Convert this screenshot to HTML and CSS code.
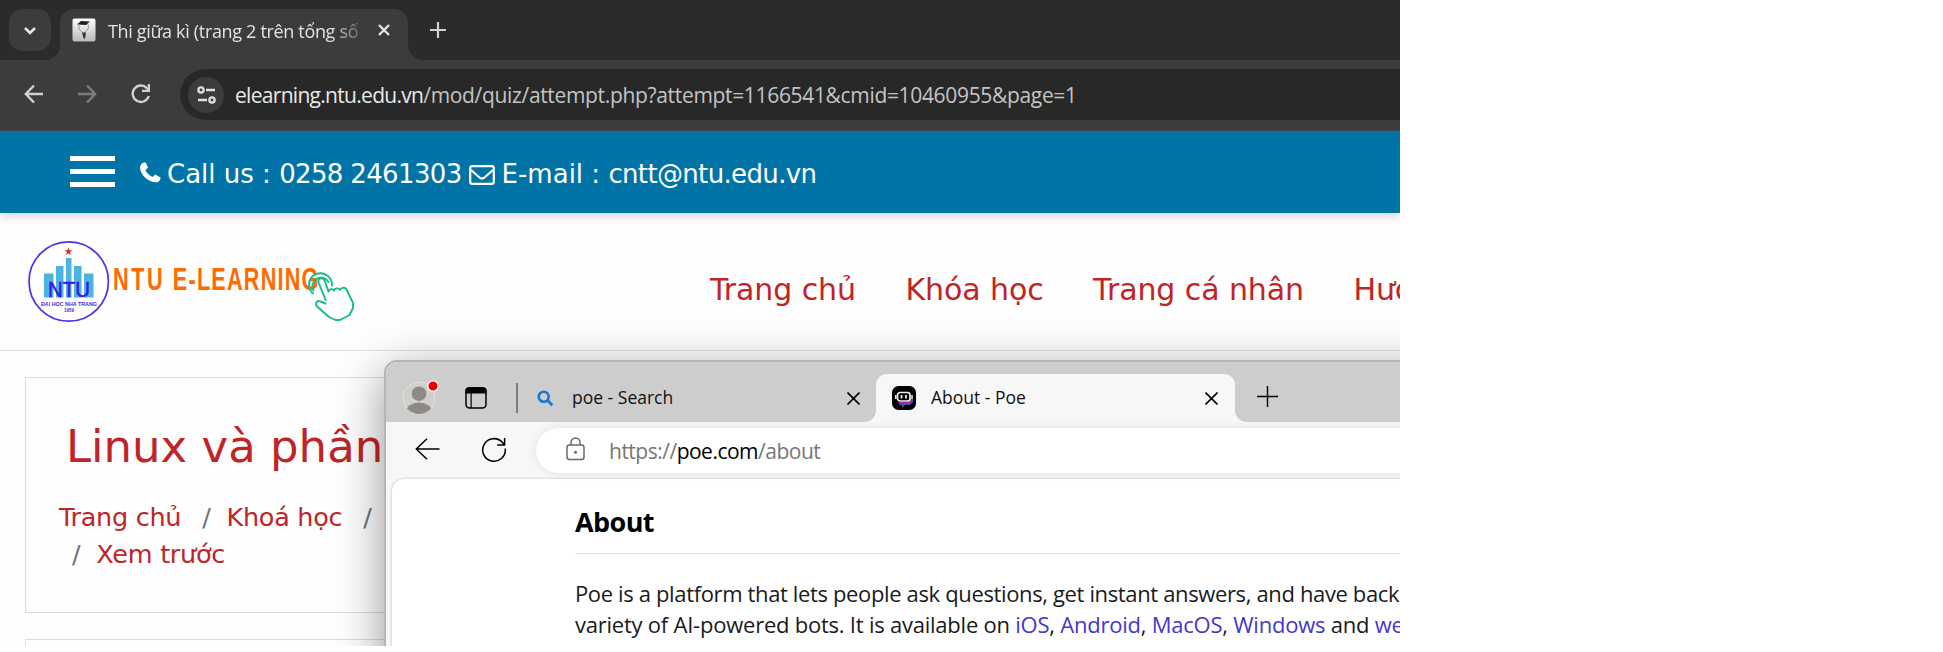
FILE: index.html
```html
<!DOCTYPE html>
<html lang="vi">
<head>
<meta charset="utf-8">
<title>Thi giữa kì</title>
<link rel="stylesheet" href="styles.css">
</head>
<body>
<main class="screen">
  <header class="chrome">
    <div class="tabstrip">
      <div class="tab-search"><svg width="14" height="9" viewBox="0 0 14 9"><path d="M2 2l5 5 5-5" fill="none" stroke="#e6e6e6" stroke-width="2.6"/></svg></div>
      <div class="chrome-tab">
        <svg class="favicon" width="24" height="24" viewBox="0 0 24 24"><defs><linearGradient id="fg" x1="0" y1="0" x2="0" y2="1"><stop offset="0" stop-color="#fff"/><stop offset="1" stop-color="#b9b9b9"/></linearGradient></defs><rect x=".5" y=".5" width="23" height="23" rx="2" fill="url(#fg)"/><path d="M5 6.500l4-3.500 9 .5-4 3.500z" fill="#222"/><path d="M7 6v5l4 4M16 6l.5 4-3 4" stroke="#999" fill="none"/><path d="M10 14.500h4l-1 6.500-1.500-1z" fill="#333"/></svg>
        <span class="chrome-title">Thi giữa kì (trang 2 trên tổng số</span>
        <svg class="tab-x" width="14" height="14" viewBox="0 0 14 14"><path d="M2 2l10 10M12 2L2 12" stroke="#e6e6e6" stroke-width="2.3"/></svg>
      </div>
      <svg class="tab-plus" width="16" height="16" viewBox="0 0 16 16"><path d="M8 0v16M0 8h16" stroke="#d0d0d0" stroke-width="2.2"/></svg>
    </div>
    <div class="toolbar">
      <svg class="t-back" width="20" height="20" viewBox="0 0 20 20"><path d="M19 10H2M10 1.500L1.800 10l8.200 8.500" fill="none" stroke="#d0d0d0" stroke-width="2.400"/></svg>
      <svg class="t-fwd" width="20" height="20" viewBox="0 0 20 20"><path d="M1 10h17M10 1.500l8.200 8.500L10 18.500" fill="none" stroke="#7d7d7d" stroke-width="2.400"/></svg>
      <svg class="t-reload" width="20" height="20" viewBox="0 0 20 20"><path d="M17.800 12A8.200 8.200 0 1 1 16 4.200L18 6.500" fill="none" stroke="#d0d0d0" stroke-width="2.400"/><path d="M19 0v8h-8V5.700h5.700V0z" fill="#d0d0d0"/></svg>
      <div class="omnibox">
        <div class="site-info"><svg width="19" height="18" viewBox="0 0 19 18"><g fill="none" stroke="#e0e0e0" stroke-width="2.300"><circle cx="4" cy="4" r="2.600"/><path d="M9 4h9M1 14h9"/><circle cx="15" cy="14" r="2.600"/></g></svg></div>
        <span class="url"><b class="host">elearning.ntu.edu.vn</b><span class="path">/mod/quiz/attempt.php?attempt=1166541&amp;cmid=10460955&amp;page=1</span></span>
      </div>
    </div>
  </header>

  <div class="contact">
    <div class="burger"><i></i><i></i><i></i></div>
    <svg class="phone" width="21" height="21" viewBox="0 0 21 21"><path d="M1 2.500C2 1 4 .300 5.500.300L8 5.500 5.500 8.200c1.500 3 4 5.500 7 6.800L15.200 12.500 20.500 15.500c.3 2-1 4-3 4.700C9.500 21.500-1 12.500.200 4.500z" fill="#fff"/></svg>
    <span class="call">Call us : <b class="tight">0258 2461303</b></span>
    <svg class="mail" width="26" height="20" viewBox="0 0 26 20"><rect x="1.200" y="1.200" width="23.600" height="17.600" rx="2" fill="none" stroke="#fff" stroke-width="2.200"/><path d="M2 5l8.500 7.500q2.500 2 5 0L24 5" fill="none" stroke="#fff" stroke-width="2.200"/></svg>
    <span class="email">E-mail : <b class="tight">cntt@ntu.edu.vn</b></span>
  </div>

  <div class="brandbar">
    <svg class="logo" width="330" height="84" viewBox="0 0 330 84">
      <circle cx="40.700" cy="41.500" r="39.700" fill="#fff" stroke="#5230ea" stroke-width="1.700"/>
      <path d="M40.500 7.500l1 2.800h3l-2.400 1.800.9 2.900-2.500-1.700-2.500 1.700.9-2.900-2.400-1.800h3z" fill="#dc2a2a"/>
      <path d="M16 33.500h9.500v24H16zM28 26h7.500v31.500H28zM38 18h5.500v39.500h-5.500zM46 26h7.500v31.500H46zM56 33.500h9.500v24H56z" fill="#4bb4e0"/>
      <text x="20" y="57" class="logo-ntu" textLength="42" lengthAdjust="spacingAndGlyphs">NTU</text>
      <text x="13" y="65.500" class="logo-small" textLength="56" lengthAdjust="spacingAndGlyphs">ĐẠI HỌC NHA TRANG</text>
      <text x="36" y="72" class="logo-small" textLength="10" lengthAdjust="spacingAndGlyphs">1959</text>
      <g transform="translate(85 50) scale(.7 1)"><text class="logo-name" textLength="71">NTU</text><text x="85.500" class="logo-name" textLength="208">E-LEARNING</text></g>
      <g fill="none" stroke="#12bd86" stroke-width="1.900" stroke-linejoin="round" stroke-linecap="round" transform="translate(280 33)">
        <path d="M17.700 27L10.500 9.500c-1-4 4-6 6-2.200L20.500 18.500c1-3 4.500-3 5.500-.8 1-3 4.500-3 6-.7 1-2.500 5-3 6.500-.7L45 30v5l-3.500 7-9.500 5h-4.500L21 44 8.500 33c-1.500-3.500 1-6 4-4.500l5 2"/>
        <path d="M5.500 17.500a8 8 0 1 1 15-8.500M5 20.500A11.500 11.500 0 1 1 24 12.500"/>
      </g>
    </svg>
    <nav class="nav"><a>Trang chủ</a><a>Khóa học</a><a>Trang cá nhân</a><a>Hướ</a></nav>
  </div>

  <section class="page">
    <div class="card">
      <h1>Linux và phần</h1>
      <div class="crumbs"><a>Trang chủ</a><i>/</i><a>Khoá học</a><i>/</i></div>
      <div class="crumbs second"><i>/</i><a>Xem trước</a></div>
    </div>
    <div class="card"></div>
  </section>

  <div class="edge">
    <div class="edge-tabs">
      <svg class="avatar" width="36" height="36" viewBox="0 0 36 36"><defs><clipPath id="av"><circle cx="17" cy="19" r="16"/></clipPath></defs><circle cx="17" cy="19" r="16" fill="#d1cfcb" stroke="#e2e1de"/><g clip-path="url(#av)" fill="#8d8984"><circle cx="17" cy="14.700" r="7.300"/><ellipse cx="17" cy="33" rx="13" ry="9.500"/></g><circle cx="31" cy="7" r="5.200" fill="#e60000" stroke="#fff" stroke-width="1.300"/></svg>
      <svg class="spaces" width="22" height="22" viewBox="0 0 22 22"><rect x="1" y="1" width="20" height="20" rx="3.500" fill="none" stroke="#000" stroke-width="1.500"/><path d="M.3 6.500V4Q.3.300 4 .3h14Q21.700.300 21.700 4v2.500zM5.500 6h1.200v15H5.500z"/></svg>
      <span class="divider"></span>
      <svg class="mag" width="17" height="17" viewBox="0 0 17 17"><circle cx="6.700" cy="6.700" r="5" fill="none" stroke="#1778d2" stroke-width="2.600"/><path d="M10.300 10.300l5 5" stroke="#1778d2" stroke-width="2.800"/></svg>
      <span class="edge-title">poe - Search</span>
      <svg class="x1" width="13" height="13" viewBox="0 0 13 13"><path d="M.5.500l12 12M12.500.500l-12 12" stroke="#000" stroke-width="1.600"/></svg>
      <div class="edge-active">
        <svg width="24" height="24" viewBox="0 0 24 24"><rect width="24" height="24" rx="6.500"/><path d="M8 17h10l3-5v4l-3 3h-5l-3 3v-3H7z" fill="#3554b8"/><path d="M6 16h11l3-4v4l-3 2h-6l-3 2v-2z" fill="#a52a93"/><rect x="5.500" y="6.500" width="12.500" height="8.500" rx="2.500" fill="#000" stroke="#eee" stroke-width="1.700"/><path d="M3.800 9v4M20 9v4" stroke="#eee" stroke-width="1.500"/><path d="M9.500 9v3.500M14 9v3.500" stroke="#eee" stroke-width="1.800"/></svg>
        <span class="edge-title">About - Poe</span>
        <svg class="x2" width="13" height="13" viewBox="0 0 13 13"><path d="M.5.500l12 12M12.500.500l-12 12" stroke="#000" stroke-width="1.600"/></svg>
      </div>
      <svg class="plus" width="21" height="21" viewBox="0 0 21 21"><path d="M10.500 0v21M0 10.500h21" stroke="#000" stroke-width="1.400"/></svg>
    </div>
    <div class="edge-bar">
      <svg class="e-back" width="25" height="22" viewBox="0 0 25 22"><path d="M24.500 11H1.500M12 .8L1.300 11 12 21.200" fill="none" stroke="#000" stroke-width="1.500"/></svg>
      <svg class="e-reload" width="26" height="26" viewBox="0 0 26 26"><path d="M24.200 11.500A11.300 11.300 0 1 1 21.500 5.500L23 7.500M23.600 1v7h-7.500" fill="none" stroke="#000" stroke-width="1.500"/></svg>
      <div class="e-url">
        <svg width="19" height="24" viewBox="0 0 19 24"><g fill="none" stroke="#6a6a6a" stroke-width="1.500"><rect x="1" y="8" width="17" height="14.500" rx="2.500"/><path d="M5 8V5.500a4.500 4.500 0 0 1 9 0V8"/></g><circle cx="9.500" cy="15.300" r="1.500" fill="#6a6a6a"/></svg>
        <span class="e-text">https://<b>poe.com</b>/about</span>
      </div>
    </div>
    <div class="edge-page">
      <h2>About</h2>
      <p>Poe is a platform that lets people ask questions, get instant answers, and have back</p>
      <p class="line2">variety of AI-powered bots. It is available on <a>iOS</a>, <a>Android</a>, <a>MacOS</a>, <a>Windows</a> and <a>we</a></p>
    </div>
  </div>
</main>
</body>
</html>
```
FILE: styles.css
```css
*{box-sizing:border-box}
body{margin:0;background:#fff;overflow:hidden;display:flex;font-family:"Open Sans","Noto Sans",sans-serif}
svg{display:block;flex:none}
h1,h2,p{margin:0}
i{font-style:normal}
.screen{position:relative;width:1400px;height:646px;flex:none;overflow:hidden;background:#fefefe}
.chrome{height:131px;background:#3c3c3c;border-bottom:2px solid #474747}
.tabstrip{height:60px;background:#2b2b2b;display:flex;padding:9px 0 0 9px}
.tab-search{width:42px;height:42px;border-radius:14px;background:#3c3c3c;display:flex;align-items:center;justify-content:center}
.chrome-tab{position:relative;width:348px;margin-left:9px;border-radius:14px 14px 0 0;background:#3c3c3c;display:flex;padding-left:12px}
.chrome-tab::before,.chrome-tab::after{content:"";position:absolute;bottom:0;width:14px;height:14px;left:-14px;background:radial-gradient(circle at 0 0,transparent 13.5px,#3c3c3c 14px)}
.chrome-tab::after{left:auto;right:-14px;background:radial-gradient(circle at 100% 0,transparent 13.5px,#3c3c3c 14px)}
.favicon{margin-top:9px}
.chrome-title{width:252px;margin:10px 0 0 12px;font-size:18px;letter-spacing:-.33px;line-height:24px;color:#e3e3e3;white-space:nowrap;-webkit-mask-image:linear-gradient(90deg,#000 222px,transparent 262px)}
.tab-x{margin:14px 0 0 17px}
.tab-plus{margin:13px 0 0 22px}
.toolbar{height:69px;display:flex;padding:9px 0 0 24px}
.t-back{margin-top:15px}
.t-fwd{margin:15px 0 0 33px}
.t-reload{margin:15px 0 0 34px}
.omnibox{margin-left:29px;height:51px;flex:1;border-radius:26px 0 0 26px;background:#282828;display:flex;align-items:center;padding-left:8px}
.site-info{width:36px;height:36px;border-radius:50%;background:#3c3c3c;display:flex;align-items:center;justify-content:center}
.url{margin:0 0 0 11px;font-size:21px;line-height:30px;color:#c4c4c4;white-space:nowrap}
.host{font-weight:400;color:#e8e8e8;letter-spacing:-.7px}
.path{letter-spacing:-.33px}
.contact{position:relative;height:82px;background:#0074a6;box-shadow:0 2px 10px rgba(0,0,0,.2);display:flex;padding-left:70px;color:#fff;font:26px/32px "DejaVu Sans",sans-serif;white-space:nowrap}
.burger{width:45px;padding-top:25px;display:flex;flex-direction:column;gap:8px}
.burger i{height:5px;background:#fff}
.phone{margin:31px 0 0 25px}
.call{margin:27px 0 0 6px}
.tight{font-weight:400;letter-spacing:-.65px}
.mail{margin:34px 0 0 7px}
.email{margin:27px 0 0 7px}
.brandbar{height:138px;border-bottom:1px solid #e3dfe0;display:flex;padding-left:28px}
.logo{margin-top:27px}
.logo-ntu{font:22px "Liberation Sans",sans-serif;fill:#3a17e8;stroke:#3a17e8;stroke-width:.5px}
.logo-small{font:bold 5.500px "Liberation Sans",sans-serif;fill:#4a2ad8}
.logo-name{font:bold 31px "Liberation Sans",sans-serif;fill:#ff6a00}
.nav{margin:59px 0 0 352px;display:flex;gap:49.5px;font:30px/36px "DejaVu Sans",sans-serif;letter-spacing:-.09px;color:#c02426;white-space:nowrap}
.page{padding:26px 0 0 25px;display:flex;flex-direction:column;gap:26px;font-family:"DejaVu Sans",sans-serif;color:#c02426;white-space:nowrap}
.card{height:236px;border:1px solid #dcdcdc;padding:39px 0 0 33px}
h1{font-size:45px;line-height:60px;font-weight:400;padding-left:7px}
.crumbs{margin-top:22px;height:37px;font-size:25.500px;letter-spacing:-.28px;line-height:37px;display:flex}
.crumbs i{color:#6c757d;margin:0 16px 0 21px}
.second{margin-top:0}
.crumbs.second i{margin:0 16px 0 13px}
.edge{position:absolute;left:384px;top:360px;width:1100px;height:400px;border:2px solid #b5b5b5;border-radius:13px 0 0 0;background:#f7f7f7;box-shadow:0 12px 48px rgba(0,0,0,.42);overflow:hidden}
.edge-tabs{height:60px;background:#cdcdcd;display:flex}
.avatar{margin:17px 0 0 16px}
.spaces{margin:25px 0 0 27px}
.divider{width:2px;height:30px;margin:21px 0 0 29px;background:#7d7d7d}
.mag{margin:28px 0 0 19px}
.edge-title{font-size:17.500px;letter-spacing:0;line-height:24px;color:#111;white-space:nowrap}
.mag+.edge-title{width:102px;margin:23px 0 0 18px}
.x1{margin:30px 0 0 173px}
.edge-active{position:relative;width:359px;margin:12px 0 0 16px;border-radius:11px 11px 0 0;background:#f7f7f7;display:flex;padding:12px 0 0 16px}
.edge-active::before,.edge-active::after{content:"";position:absolute;bottom:0;width:11px;height:11px;left:-11px;background:radial-gradient(circle at 0 0,transparent 10.5px,#f7f7f7 11px)}
.edge-active::after{left:auto;right:-11px;background:radial-gradient(circle at 100% 0,transparent 10.5px,#f7f7f7 11px)}
.edge-active .edge-title{width:98px;margin:-1px 0 0 15px}
.x2{margin:6px 0 0 176px}
.plus{margin:24px 0 0 22px}
.edge-bar{height:57px;display:flex;padding-left:29px}
.e-back{margin-top:16px}
.e-reload{margin:15px 0 0 41px}
.e-url{height:45px;flex:1;margin:6px 0 0 29px;border-radius:23px 0 0 23px;background:#fff;box-shadow:0 0 8px rgba(0,0,0,.1);display:flex;padding:9px 0 0 30px}
.e-text{margin:0 0 0 24px;font-size:21px;letter-spacing:-.5px;line-height:28px;color:#777;white-space:nowrap}
.e-text b{font-weight:400;color:#000}
.edge-page{margin-left:6px;height:300px;border-radius:12px 0 0 0;background:#fff;box-shadow:0 0 3px rgba(0,0,0,.25);padding:24px 0 0 183px;white-space:nowrap}
h2{font-size:27px;letter-spacing:-.58px;line-height:38px;height:51px;border-bottom:1px solid #e3e3e3;margin-bottom:24px;color:#000}
p{font-size:22px;letter-spacing:-.36px;line-height:31px;color:#1a1a1a}
.line2{letter-spacing:-.23px}
p a{color:#4338ca}
```
